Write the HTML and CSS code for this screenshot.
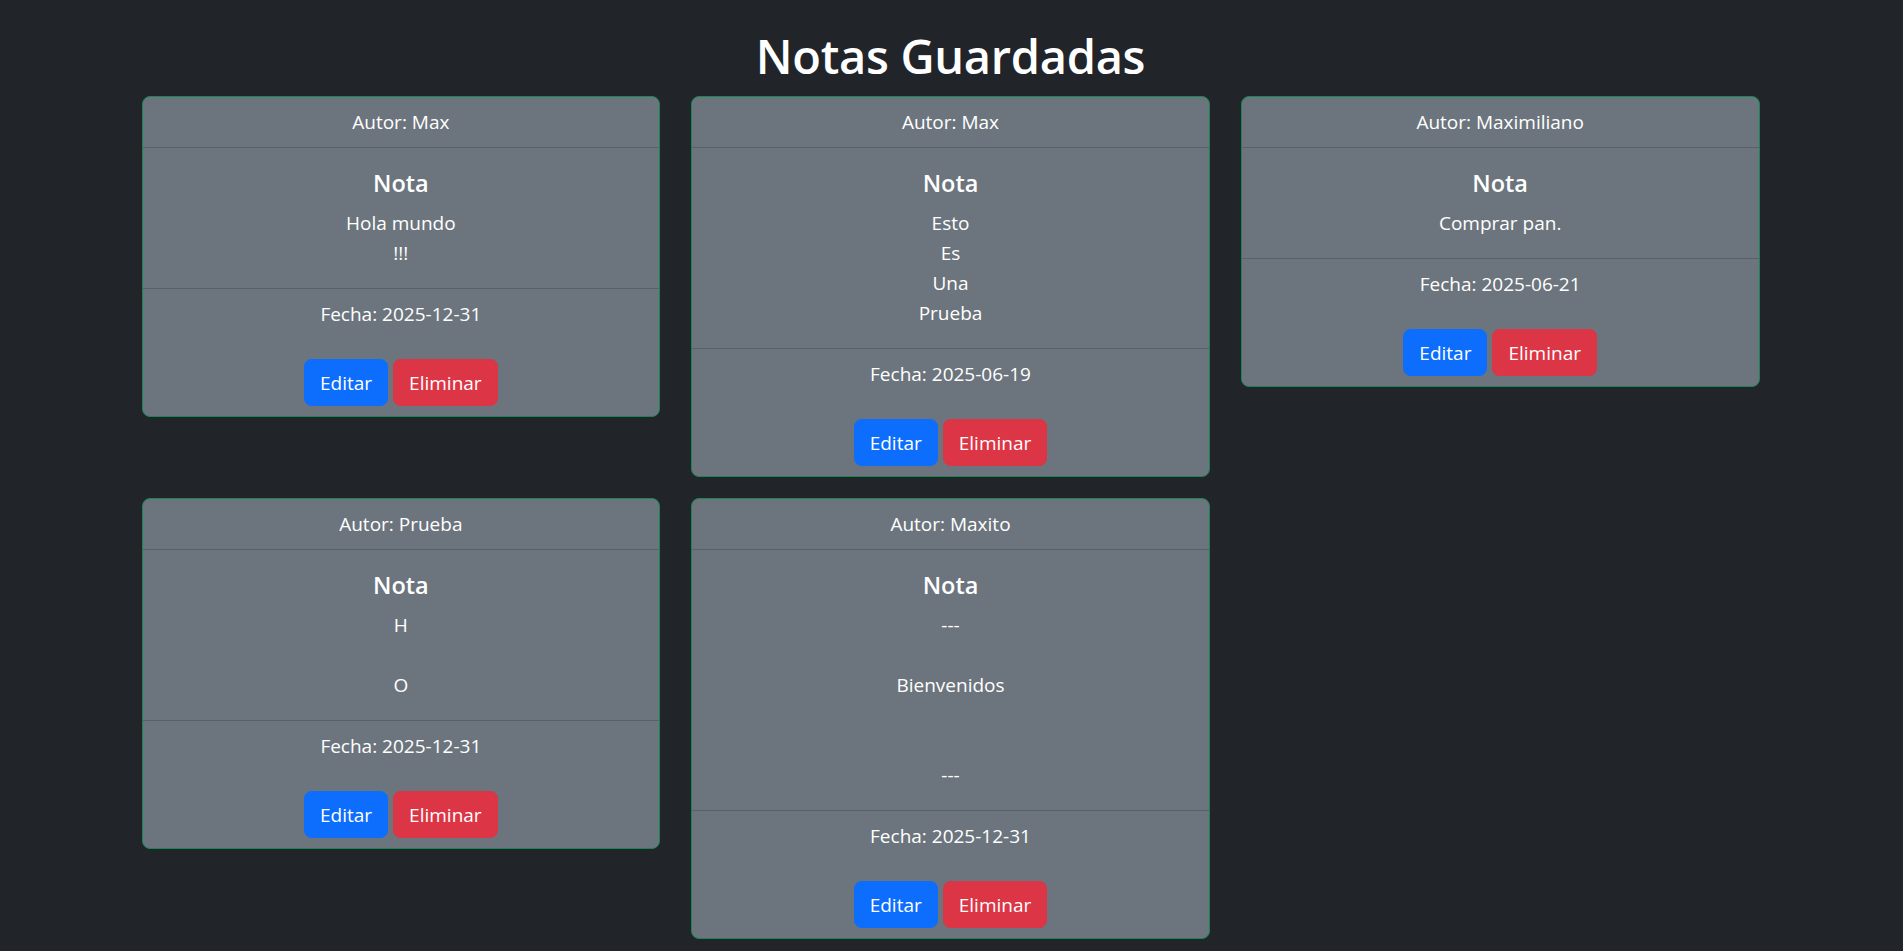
FILE: index.html
```html
<!DOCTYPE html>
<html lang="es">
<head>
<meta charset="utf-8">
<title>Notas Guardadas</title>
<link rel="stylesheet" href="styles.css">
</head>
<body>
<main class="page">
  <h1 class="title">Notas Guardadas</h1>
  <div class="grid">
    <div class="card">
      <div class="card-header">Autor: Max</div>
      <div class="card-body">
        <h5 class="card-title">Nota</h5>
        <p class="card-text">Hola mundo<br>!!!</p>
      </div>
      <div class="card-footer">
        <p class="date">Fecha: 2025-12-31</p>
        <div class="actions"><button class="btn btn-primary">Editar</button><button class="btn btn-danger">Eliminar</button></div>
      </div>
    </div>
    <div class="card">
      <div class="card-header">Autor: Max</div>
      <div class="card-body">
        <h5 class="card-title">Nota</h5>
        <p class="card-text">Esto<br>Es<br>Una<br>Prueba</p>
      </div>
      <div class="card-footer">
        <p class="date">Fecha: 2025-06-19</p>
        <div class="actions"><button class="btn btn-primary">Editar</button><button class="btn btn-danger">Eliminar</button></div>
      </div>
    </div>
    <div class="card">
      <div class="card-header">Autor: Maximiliano</div>
      <div class="card-body">
        <h5 class="card-title">Nota</h5>
        <p class="card-text">Comprar pan.</p>
      </div>
      <div class="card-footer">
        <p class="date">Fecha: 2025-06-21</p>
        <div class="actions"><button class="btn btn-primary">Editar</button><button class="btn btn-danger">Eliminar</button></div>
      </div>
    </div>
    <div class="card">
      <div class="card-header">Autor: Prueba</div>
      <div class="card-body">
        <h5 class="card-title">Nota</h5>
        <p class="card-text">H<br><br>O</p>
      </div>
      <div class="card-footer">
        <p class="date">Fecha: 2025-12-31</p>
        <div class="actions"><button class="btn btn-primary">Editar</button><button class="btn btn-danger">Eliminar</button></div>
      </div>
    </div>
    <div class="card">
      <div class="card-header">Autor: Maxito</div>
      <div class="card-body">
        <h5 class="card-title">Nota</h5>
        <p class="card-text">---<br><br>Bienvenidos<br><br><br>---</p>
      </div>
      <div class="card-footer">
        <p class="date">Fecha: 2025-12-31</p>
        <div class="actions"><button class="btn btn-primary">Editar</button><button class="btn btn-danger">Eliminar</button></div>
      </div>
    </div>
  </div>
</main>
</body>
</html>
```
FILE: styles.css
```css
* { box-sizing: border-box; }
html, body { margin: 0; }
body {
  background: #212529;
  color: #fff;
  font-family: "Open Sans", "Noto Sans", sans-serif;
  font-size: 19px;
  line-height: 30px;
}
.page {
  width: 1620px;
  margin: 0 auto;
  padding: 26px 2px 0 0;
}
.title {
  margin: 0 0 10px;
  text-align: center;
  font-size: 47px;
  line-height: 60px;
  font-weight: 600;
  letter-spacing: -0.3px;
}
.grid {
  display: grid;
  grid-template-columns: repeat(3, 1fr);
  column-gap: 31px;
  row-gap: 21px;
  align-items: start;
}
.card {
  background: #6c757d;
  border: 1px solid #198754;
  border-radius: 8px;
  text-align: center;
  overflow: hidden;
}
.card-header {
  padding: 10px 20px;
  border-bottom: 1px solid rgba(0, 0, 0, 0.175);
}
.card-body {
  padding: 20px;
}
.card-title {
  margin: 0 0 10px;
  font-size: 23.5px;
  line-height: 30px;
  font-weight: 600;
}
.card-text {
  margin: 0;
}
.card-footer {
  padding: 10px 20px;
  border-top: 1px solid rgba(0, 0, 0, 0.175);
}
.date {
  margin: 0 0 20px;
}
.actions {
  padding-top: 10px;
  display: flex;
  justify-content: center;
  gap: 5px;
}
.btn {
  font-family: inherit;
  font-size: 19px;
  line-height: 30px;
  padding: 7.5px 15px;
  border: 1px solid transparent;
  border-radius: 7.5px;
  color: #fff;
  cursor: pointer;
}
.btn-primary { background: #0d6efd; border-color: #0d6efd; }
.btn-danger { background: #dc3545; border-color: #dc3545; }
```
